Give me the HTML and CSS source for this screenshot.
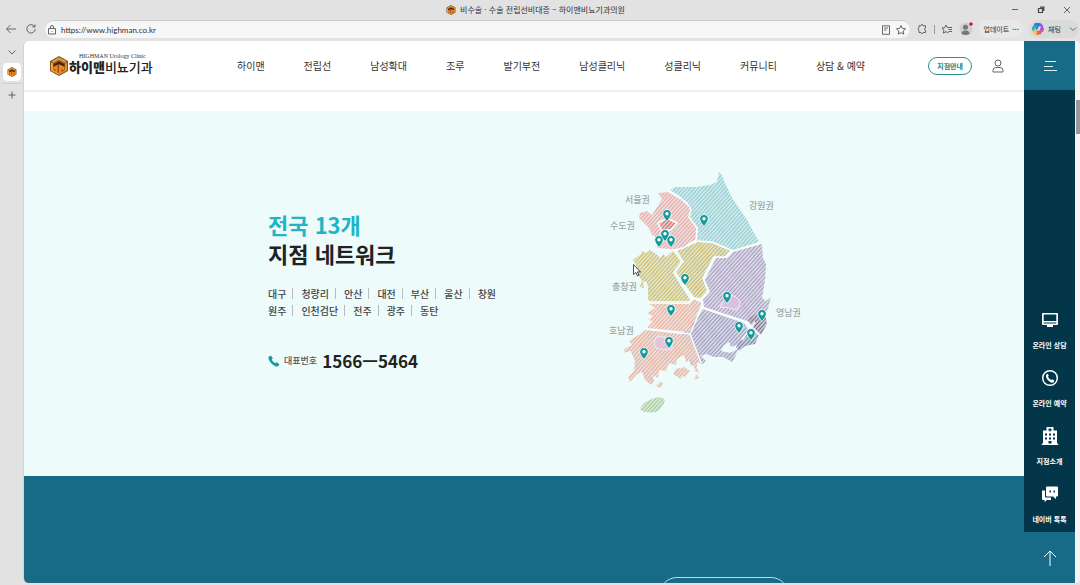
FILE: index.html
```html
<!DOCTYPE html>
<html lang="ko">
<head>
<meta charset="utf-8">
<title>비수술 · 수술 전립선비대증 – 하이맨비뇨기과의원</title>
<link rel="stylesheet" href="styles.css">
</head>
<body>
<svg class="defs" aria-hidden="true">
  <symbol id="mark" viewBox="0 0 18 20">
    <path d="M9 0 18 5v10l-9 5-9-5V5z" fill="#8a521d"/>
    <path d="M9 1.200 16.500 5.300 14.500 7 9 4 3.500 7 1.500 5.300z" fill="#d79a3c"/>
    <path d="M1 6.500l2 1V14l6 3.200v1.600l-8-4.300z" fill="#f0a93c"/>
    <path d="M17 6.500l-2 1V14l-6 3.200v1.600l8-4.300z" fill="#d9922e"/>
    <path d="M3.500 8.500 9 5.500l5.500 3v2L9 8l-5.500 2.500z" fill="#3d2410"/>
    <path d="M3.500 11l4-2v8L5.500 16v-3l-2 1zM9 8.500l5.500 2.500v3.500l-3-1.500v3.500l-2.500 1z" fill="#ff7f1f"/>
  </symbol>
  <symbol id="pin" viewBox="0 0 10 13">
    <path d="M5 .5A4.300 4.300 0 0 0 .7 4.800C.7 7.800 5 12.300 5 12.300s4.300-4.500 4.300-7.500A4.300 4.300 0 0 0 5 .5z" fill="#159a9c" stroke="#fff" stroke-width=".8"/>
    <circle cx="5" cy="4.700" r="1.700" fill="#fff"/>
  </symbol>
</svg>

<div class="browser">
  <header class="titlebar">
    <div class="window-title"><svg class="mark-small"><use href="#mark"/></svg><span>비수술 · 수술 전립선비대증 – 하이맨비뇨기과의원</span></div>
    <div class="window-controls">
      <button aria-label="최소화"><svg viewBox="0 0 8 8"><path d="M1 3.500h6"/></svg></button>
      <button aria-label="이전 크기로"><svg viewBox="0 0 8 8"><path d="M1.500 2.500h4v4h-4zM3 1.200h3.800V5" stroke-width="1.200"/></svg></button>
      <button aria-label="닫기"><svg viewBox="0 0 8 8"><path d="M1 1l6 6M7 1l-6 6"/></svg></button>
    </div>
  </header>

  <div class="toolbar">
    <button aria-label="뒤로"><svg viewBox="0 0 12 12"><path d="M11 6H2M5.500 2 1.500 6l4 4"/></svg></button>
    <button aria-label="새로 고침"><svg viewBox="0 0 12 12"><path d="M9.500 3.500A4.200 4.200 0 1 0 10.200 6M10 1.500v2.500H7.500"/></svg></button>
    <div class="address">
      <svg viewBox="0 0 12 12"><path d="M2.500 4.500h7v5.500h-7zM4.500 4.500V3a1.500 1.500 0 0 1 3 0v1.500M6 7v.8"/></svg>
      <input type="text" aria-label="주소" value="https://www.highman.co.kr">
      <button aria-label="읽기 모드"><svg viewBox="0 0 12 12"><path d="M2.500 1.800h7v8.500h-7zM4 4h4M4 6h2.500"/></svg></button>
      <button aria-label="즐겨찾기 추가"><svg viewBox="0 0 12 12"><path d="M6 1.500l1.400 2.900 3.100.4-2.300 2.200.6 3.100L6 8.600l-2.800 1.500.6-3.100-2.300-2.200 3.100-.4z"/></svg></button>
    </div>
    <div class="tools">
      <button aria-label="확장"><svg viewBox="0 0 12 12"><path d="M3 2.800h1.800a1.200 1.200 0 0 1 2.400 0H9.500v2a1.300 1.300 0 0 0 0 2.500v2.200H7.300a1.300 1.300 0 0 1-2.500 0H3V7.300a1.300 1.300 0 0 1 0-2.500z"/></svg></button>
      <span class="tool-rule"></span>
      <button aria-label="즐겨찾기"><svg viewBox="0 0 12 12"><path d="M7.500 10L5 8.600l-2.600 1.500.5-3L1 5l2.700-.4L5 2l1.200 2.500H11M7.500 6.500H11M7.500 8.500H11"/></svg></button>
      <button aria-label="프로필"><svg class="avatar" viewBox="0 0 14 14"><circle cx="7" cy="7" r="6.500" fill="#cfcfcf"/><circle cx="6.500" cy="5.200" r="2.500" fill="#777"/><path d="M2.500 12q0-3.500 4-3.500t4 3.500q-4 2-8 0z" fill="#777"/><circle cx="12" cy="2" r="1.700" fill="#c4122f"/></svg></button>
      <button class="pill">업데이트 <b>···</b></button>
      <button class="pill chat">
        <svg viewBox="0 0 14 14"><path d="M4 1h5l2 4-3-1-3 6-3-1-1-3z" fill="#2a78e4" stroke="none"/><path d="M9 1l2 1 2 5-1 3H8l2-5z" fill="#a64df0" stroke="none"/><path d="M1 6l3-3 2 1-2 6-2 0z" fill="#22b8c4" stroke="none"/><path d="M2 9l3-3 1 4 1 3H4z" fill="#f6c143" stroke="none"/><path d="M6 9l6-1-2 4-4 1z" fill="#f05a6c" stroke="none"/></svg>
        <span>채팅</span>
        <svg class="chevron" viewBox="0 0 12 12"><path d="M3 4.500l3 3 3-3"/></svg>
      </button>
    </div>
  </div>

  <div class="workspace">
    <aside class="tabs">
      <button aria-label="탭 목록"><svg viewBox="0 0 12 12"><path d="M2.500 4.500L6 8l3.500-3.500"/></svg></button>
      <button class="tab-active" aria-label="하이맨비뇨기과의원"><svg class="mark-small"><use href="#mark"/></svg></button>
      <button class="tab-new" aria-label="새 탭"><svg viewBox="0 0 12 12"><path d="M6 2.500v7M2.500 6h7"/></svg></button>
    </aside>

    <div class="viewport">
      <div class="site">
        <header class="site-header">
          <a class="logo" href="#">
            <svg class="logo-mark"><use href="#mark"/></svg>
            <span class="logo-text"><small>HIGHMAN Urology Clinic</small><span><b>하이맨</b>비뇨기과</span></span>
          </a>
          <nav class="menu">
            <a href="#">하이맨</a><a href="#">전립선</a><a href="#">남성확대</a><a href="#">조루</a><a href="#">발기부전</a><a href="#">남성클리닉</a><a href="#">성클리닉</a><a href="#">커뮤니티</a><a href="#">상담 &amp; 예약</a>
          </nav>
          <a class="branch-link" href="#">지점안내</a>
          <a class="account" href="#" aria-label="로그인"><svg viewBox="0 0 12 14"><circle cx="6" cy="4" r="3"/><path d="M1 13v-1.500q0-3 3-3h4q3 0 3 3V13z"/></svg></a>
        </header>

        <main>
          <section class="network">
            <div class="network-inner">
              <div class="network-text">
                <h2><em>전국 13개</em><br>지점 네트워크</h2>
                <ul class="branches"><li>대구</li><li>청량리</li><li>안산</li><li>대전</li><li>부산</li><li>울산</li><li>창원</li></ul>
                <ul class="branches"><li>원주</li><li>인천검단</li><li>전주</li><li>광주</li><li>동탄</li></ul>
                <p class="phone"><svg viewBox="0 0 12 12"><path d="M2.800.6L4.800 3.300 3.700 4.700Q5 7 7.300 8.300L8.700 7.200l2.700 2-1 1.900Q9 12 7 11 2.500 8.800.6 4 .1 2 1 1.500z"/></svg><span>대표번호</span><strong>1566ㅡ5464</strong></p>
              </div>
              <svg class="map" viewBox="0 0 230 270" role="img" aria-label="전국 지점 지도">
                <defs>
                  <pattern id="hatch" width="2.800" height="2.800" patternUnits="userSpaceOnUse" patternTransform="rotate(42)"><path d="M0 0h2.800v2.800H0z" fill="#fff" fill-opacity=".15"/><path d="M1.400 0v2.800" stroke="#fff" stroke-width="1.400"/></pattern>
                  <mask id="stripes" maskUnits="userSpaceOnUse" x="0" y="0" width="230" height="270"><path d="M0 0h230v270H0z" fill="url(#hatch)"/></mask>
                </defs>
                <g mask="url(#stripes)" opacity=".8">
                  <path fill="#e58f8c" d="M68 33l12-1 10 6 9 8 2 4-2 7 8 11-1 11-13 9-8 2-18-2 2-9-7-4-3-7-10-10 1-5 7-2 5 4 5-8 5-8z"/>
                  <path fill="#79bcc3" d="M80 30l5-3h22l13-2 7-3 2-10 3 3 3 8 7 15 15 22 12 22-26 8-21-8-14-1-1-3 1-10-9-11 2-7-3-7-10-8z"/>
                  <path fill="#d0403c" d="M69 63l8-4 9 4-6 6-9 1z"/>
                  <path fill="#c2a842" d="M43 100l8-6 1-3 4 2 4-3 6 4 4 4 3-4 3 3 7-6 8 11-8 11 17 27-3 3H61l-3-3 0-14-2-5-3 1 1 6-4-1 2-7-4-5-5-5 4-3z"/>
                  <path fill="#c0a440" d="M87 91l21-9 14 1 19 8-6 6h-11l-11 21 5 13-7 7-7-1-18-25 8-10z"/>
                  <path fill="#9b7fae" d="M143 92l29-8 1 14 3 6-1 16-3 18 4 3 5-4-3 11-4 7-9-1-8 7-43-14-1-7 7-8-5-12 11-22h11z"/>
                  <path fill="#8d7bab" d="M113 149l41 14 5 8-7 7-3 6-8 3-2-5-6 4-2 5 9 2 8-4-3 8-3 5-9-5-9 0-8-3-5 2 5 5-4 3-6-3-5 4-10-30z"/>
                  <path fill="#62466b" d="M157 160l8-6 10 0 2 10-6 11-7-7z"/>
                  <path fill="#5e5988" d="M151 180l11-13 7 8-4 9-10 2-6 5-3-4z"/>
                  <path fill="#eb977f" d="M59 144h40l5-5 8 4-13 29-42-4 6-7-5-1 5-4-6-3 8-5z"/>
                  <path fill="#e6957f" d="M56 170l43 5 10 25-3 8-5-8-5 2-2-7-7 4-1 6-7-2-3 8-7-1-1 8-5-3 1 6-3 4-6-5-3-8-6 3-6 7-2-5 6-6 1-10-4-10-8 2 2-4 7-4-3-4z"/>
                  <path fill="#e6957f" d="M83 214l3-5 8-2 6 4-5 6-3-1-1 3zM100 205l5-2 4 10-4-2-1-5zM103 220l4-6 2 4zM41 193l8-1 1 5-7-1zM66 226l5-5 2 3-3 4z"/>
                  <path fill="#8fba78" d="M50 249q4-8 12-10 9-4 13 1-2 8-9 12-12 2-16-3z"/>
                </g>
                <path class="city" d="M130 147q8-16 16-10 8 6 0 13-7-3-16-3zM64 183q2-9 9-6l9 2v10q-9 2-16-1z"/>
                <path class="borders" d="M78 31l12 7 9 8 2 4-2 7 8 11-1 12-13 8-9 2-17-1M108 81l14 1 21 9 27-8M86 90l6 11-8 11 19 27M141 91l-6 6h-11l-11 21 5 13-7 8M58 142h41l5-4 8 4 1 6 43 14 13 13M112 147l-12 27-43-5M100 174l11 29M152 180l13-18M68 63l9-5 10 5-6 7-9 1z"/>
                <g class="map-labels">
                  <text x="35" y="43">서울권</text><text x="20" y="69">수도권</text><text x="159" y="49">강원권</text><text x="22" y="130">충청권</text><text x="19" y="174">호남권</text><text x="186" y="156">영남권</text>
                </g>
                <g>
                  <use href="#pin" x="72" y="49" width="10" height="13"/><use href="#pin" x="109" y="54" width="10" height="13"/>
                  <use href="#pin" x="64" y="75" width="10" height="13"/><use href="#pin" x="76" y="75" width="10" height="13"/><use href="#pin" x="70" y="69" width="10" height="13"/>
                  <use href="#pin" x="90" y="113" width="10" height="13"/><use href="#pin" x="132" y="131" width="10" height="13"/>
                  <use href="#pin" x="167" y="149" width="10" height="13"/><use href="#pin" x="144" y="161" width="10" height="13"/><use href="#pin" x="156" y="168" width="10" height="13"/>
                  <use href="#pin" x="76" y="144" width="10" height="13"/><use href="#pin" x="74" y="176" width="10" height="13"/><use href="#pin" x="49" y="187" width="10" height="13"/>
                </g>
                <path class="pointer" d="M43.500 104.500v10l2.300-2 1.700 3.500 1.500-.8-1.600-3.300h3z"/>
              </svg>
            </div>
          </section>
          <section class="next"><a class="next-button" href="#" aria-label="더 보기"></a></section>
        </main>
      </div>

      <aside class="rail">
        <button class="rail-menu" aria-label="전체 메뉴"><svg viewBox="0 0 14 12"><path d="M2 1.500h11M1 6.500h9M1 10.500h13"/></svg></button>
        <nav class="rail-links">
          <a href="#"><svg viewBox="0 0 18 18"><path fill-rule="evenodd" d="M2 2h14q1 0 1 1v10q0 1-1 1h-4v2H6v-2H2q-1 0-1-1V3q0-1 1-1zm.700 1.500v6.500h12.600V3.500zm0 8v1h12.600v-1z"/></svg><span>온라인 상담</span></a>
          <a href="#"><svg viewBox="0 0 18 18"><circle cx="9" cy="9" r="7.300" fill="none" stroke="#fff" stroke-width="1.500"/><path d="M6.300 4.500l1.500 2.100-.8 1.200Q8 10 10.200 11l1.200-.8 2 1.500-.8 1.600q-1.500.7-3.100 0Q6 11.500 5 8q-.5-2.500 1.300-3.500z"/></svg><span>온라인 예약</span></a>
          <a href="#"><svg viewBox="0 0 18 18"><path fill-rule="evenodd" d="M5.500 0h7v3.500H16v13h1.200V18H.8v-1.500H2v-13h3.500zm2.900 1v1.200H7.200v1.200h1.200v1.200h1.200V3.400h1.200V2.200H9.600V1zM4 6.500v2h2v-2zm4 0v2h2v-2zm4 0v2h2v-2zm-8 4v2h2v-2zm4 0v2h2v-2zm4 0v2h2v-2zM7.500 14v2.500h3V14z"/></svg><span>지점소개</span></a>
          <a href="#"><svg viewBox="0 0 18 18"><path fill-rule="evenodd" d="M6 1.500h10q1 0 1 1v8q0 1-1 1h-1v2.500l-3-2.500H6q-1 0-1-1v-8q0-1 1-1zm2.500 4v2H10v-2zm4 0v2H14v-2z"/><path d="M1 5.500h3v6q0 1 1 1h5v2.500H6L3.500 17v-2H2q-1 0-1-1z"/></svg><span>네이버 톡톡</span></a>
        </nav>
        <a class="rail-top" href="#" aria-label="맨 위로"><svg viewBox="0 0 16 18"><path d="M8 17V2M2 8l6-6 6 6"/></svg></a>
      </aside>
      <div class="scrollbar"><div class="thumb"></div></div>
    </div>
  </div>
</div>
</body>
</html>
```
FILE: styles.css
```css
* { box-sizing: border-box; }
body {
  margin: 0;
  background: #e2e2e2;
  color: #333;
  font-family: "Noto Sans CJK KR", "Noto Sans", sans-serif;
  font-size: 10px;
}
a { color: inherit; text-decoration: none; }
button { padding: 0; border: 0; background: none; color: inherit; font: inherit; }
svg { display: block; flex: none; }
ul, h2, p { margin: 0; padding: 0; }
.defs { position: absolute; width: 0; height: 0; }

.browser { display: flex; flex-direction: column; height: 100vh; overflow: hidden; }
.titlebar { display: grid; grid-template-columns: 1fr auto 1fr; align-items: center; height: 19px; padding-right: 9px; font-size: 8px; }
.window-title { grid-column: 2; display: flex; align-items: center; gap: 4px; white-space: nowrap; }
.mark-small { width: 10px; height: 10px; }
.window-controls { display: flex; justify-content: flex-end; gap: 18px; }
.window-controls svg { width: 8px; height: 8px; }
.window-controls svg, .toolbar svg, .tabs svg { fill: none; stroke: #444; stroke-width: 0.8; }

.toolbar { display: flex; align-items: center; gap: 8px; height: 20px; padding: 0 1px 0 5px; }
.toolbar svg { width: 12px; height: 12px; }
.address { flex: 1; display: flex; align-items: center; gap: 3px; height: 18px; padding: 0 3px 0 1px; border-radius: 9px; background: #f7f7f7; border-top: 1px solid #ccc; }
.address input { flex: 1; min-width: 0; padding: 0; border: 0; outline: 0; background: none; color: #333; font: 8px/12px Lato, "Open Sans", sans-serif; }
.tools { display: flex; align-items: center; gap: 6px; margin-left: -2px; font-size: 7px; }
.tool-rule { width: 1px; height: 9px; background: #999; }
.toolbar .avatar { width: 14px; height: 14px; stroke: none; }
.pill { display: flex; align-items: center; gap: 3px; height: 18px; padding: 0 4px; border-radius: 9px; background: #e8e8e8; white-space: nowrap; }
.chat { background: #dadada; padding: 0 0 0 2px; }
.chat span { margin-right: 3px; }
.toolbar .chat svg { width: 14px; height: 14px; }
.toolbar .chat .chevron { width: 12px; height: 12px; }

.workspace { flex: 1; display: flex; min-height: 0; padding: 2px 0; }
.tabs { display: flex; flex-direction: column; align-items: center; width: 23px; padding-top: 5px; }
.tabs svg { width: 12px; height: 12px; }
.tab-active { display: grid; place-items: center; width: 18px; height: 18px; margin: 5px 0 2px; border-radius: 4px; background: #fff; }
.tabs .mark-small { width: 10px; height: 10px; stroke: none; }
.tab-new { padding: 5px 4px; border-top: 1px solid #ccc; }

.viewport { flex: 1; display: flex; min-width: 0; border-left: 1px solid #d2d2d2; border-radius: 5px; overflow: hidden; background: #fff; }
.site { flex: 1; min-width: 0; overflow: hidden; }
.site-header { display: flex; align-items: center; height: 51px; padding: 0 20px 0 26px; border-bottom: 2px solid #efefef; }
.logo { display: flex; align-items: center; gap: 1px; width: 187px; }
.logo-mark { width: 18px; height: 20px; }
.logo-text { display: flex; flex-direction: column; padding-bottom: 3px; font-size: 13px; line-height: 16px; color: #222; white-space: nowrap; }
.logo-text > span { font-weight: 500; }
.logo-text small { padding-left: 10px; font: 6px/6px "Liberation Serif", serif; color: #333; }
.logo-text b { font-weight: 900; }
.menu { display: flex; gap: 39px; margin-right: auto; white-space: nowrap; }
.branch-link { padding: 0 8px; border: 1px solid #2b9189; border-radius: 9px; color: #16877f; font-size: 7px; font-weight: bold; line-height: 16px; white-space: nowrap; }
.account { margin-left: 20px; }
.account svg { width: 12px; height: 14px; fill: none; stroke: #555; stroke-width: 0.9; }

.network { display: flex; justify-content: center; align-items: center; min-height: 365px; margin-top: 19px; padding-left: 40px; background: #edfbfb; }
.network-inner { display: flex; align-items: center; padding-top: 3px; }
.network-text { width: 322px; padding-bottom: 5px; }
h2 { margin-bottom: 17px; color: #222; font-size: 22px; line-height: 29px; }
h2 em { color: #1fb5c4; font-style: normal; }
.branches { display: flex; color: #444; font-weight: 500; line-height: 17px; list-style: none; }
.branches li { display: flex; align-items: center; }
.branches li:not(:last-child)::after { content: ""; width: 1px; height: 11px; margin: 0 8px 0 6px; background: #bbb; }
.phone { display: flex; align-items: center; margin-top: 28px; line-height: 28px; }
.phone svg { width: 12px; height: 12px; fill: #159a9c; }
.phone span { margin: 0 5px 0 4px; font-size: 9px; font-weight: 500; color: #555; }
.phone strong { color: #222; font-size: 17px; }
.map { width: 230px; height: 270px; }
.borders { fill: none; stroke: #f7ffff; stroke-width: 1.5; }
.city { fill: #e3bfe6; fill-opacity: 0.6; stroke: #f3eafa; }
.map-labels { fill: #a0a6a8; font-size: 9px; font-weight: 500; }
.pointer { fill: #fff; stroke: #222; stroke-width: 0.8; }
.next { display: flex; justify-content: center; padding: 101px 0 40px 400px; background: #186b87; }
.next-button { width: 130px; height: 36px; border: 1px solid #a9e6ee; border-radius: 18px; }

.rail { display: flex; flex-direction: column; width: 51px; background: #033649; color: #fff; }
.rail-menu, .rail-top { display: grid; place-items: center; background: #186b87; }
.rail-menu { height: 49px; }
.rail-top { height: 51px; }
.rail-menu svg { width: 14px; height: 12px; fill: none; stroke: #d9f3f5; }
.rail-top svg { width: 16px; height: 18px; fill: none; stroke: #fff; }
.rail-links { flex: 1; display: flex; flex-direction: column; justify-content: flex-end; gap: 18px; padding-bottom: 7px; font-size: 7px; font-weight: bold; line-height: 11px; white-space: nowrap; }
.rail-links a { display: flex; flex-direction: column; align-items: center; gap: 11px; }
.rail-links svg { width: 18px; height: 18px; fill: #fff; }
.scrollbar { width: 5px; padding-top: 59px; background: #f4f4f4; }
.thumb { height: 34px; margin-left: 1px; background: #999; }
```
